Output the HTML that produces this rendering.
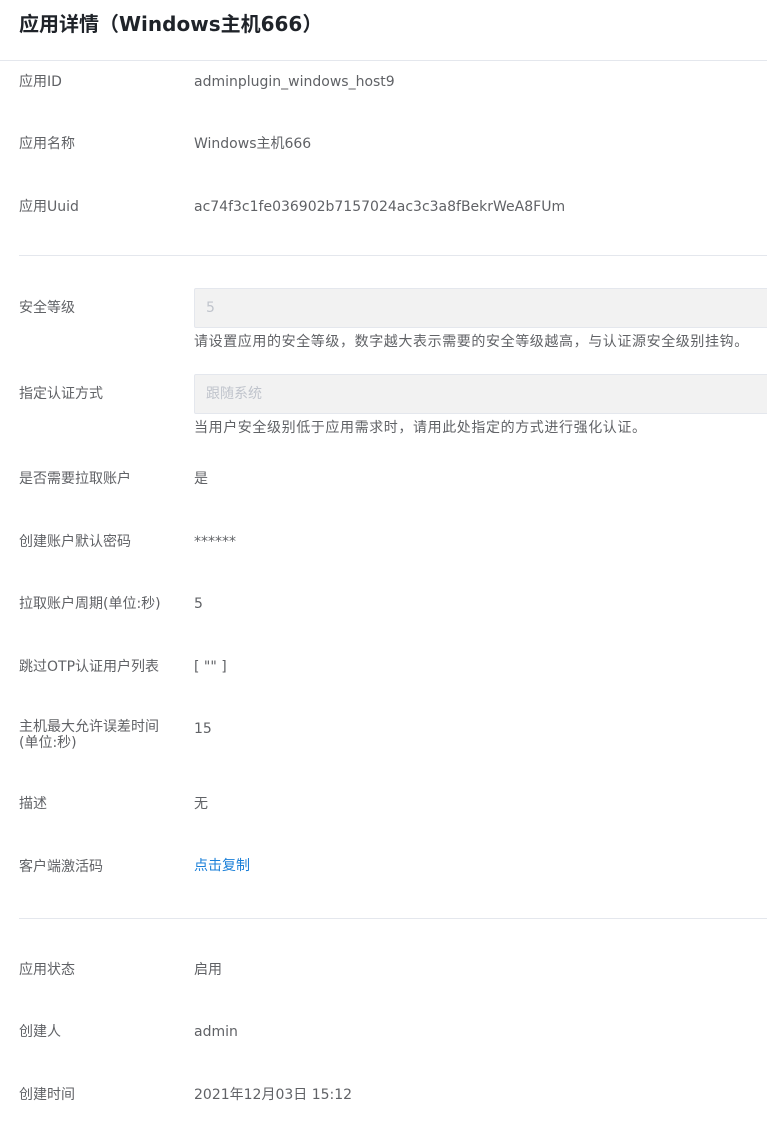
<!DOCTYPE html>
<html><head><meta charset="utf-8"><style>
body{margin:0;width:767px;height:1122px;background:#fff;font-family:"DejaVu Sans","Noto Sans CJK SC",sans-serif;position:relative;overflow:hidden}
.a{position:absolute;font-size:14px;line-height:20px;color:#606266;white-space:nowrap}
.l{left:19px}.v{left:194px}
.t{position:absolute;left:19px;top:8px;font-size:20px;line-height:30px;color:#1f2329;font-weight:bold;font-family:"Noto Sans CJK SC",sans-serif}
.t span{font-family:"DejaVu Sans",sans-serif;font-weight:600}
.hr{position:absolute;left:0;right:0;height:1px;background:#e4e7ed}
.in{position:absolute;left:194px;width:580px;height:40px;background:#f2f2f2;border:1px solid #e4e7ed;border-radius:2px;box-sizing:border-box;color:#c0c4cc;font-size:14px;line-height:38px;padding-left:11px}
.h{font-size:14px;color:#606266;letter-spacing:0.6px}
</style></head><body>
<div class="t">应用详情（<span>Windows</span>主机<span>666</span>）</div>
<div class="hr" style="top:60px"></div>
<div class="a l" style="top:72px">应用ID</div><div class="a v" style="top:72px">adminplugin_windows_host9</div>
<div class="a l" style="top:134px">应用名称</div><div class="a v" style="top:134px">Windows主机666</div>
<div class="a l" style="top:197px">应用Uuid</div><div class="a v" style="top:197px">ac74f3c1fe036902b7157024ac3c3a8fBekrWeA8FUm</div>
<div class="hr" style="left:19px;top:255px"></div>
<div class="a l" style="top:298px">安全等级</div><div class="in" style="top:288px">5</div>
<div class="a v h" style="top:332px">请设置应用的安全等级，数字越大表示需要的安全等级越高，与认证源安全级别挂钩。</div>
<div class="a l" style="top:384px">指定认证方式</div><div class="in" style="top:374px">跟随系统</div>
<div class="a v h" style="top:418px">当用户安全级别低于应用需求时，请用此处指定的方式进行强化认证。</div>
<div class="a l" style="top:469px">是否需要拉取账户</div><div class="a v" style="top:469px">是</div>
<div class="a l" style="top:532px">创建账户默认密码</div><div class="a v" style="top:532px">******</div>
<div class="a l" style="top:594px">拉取账户周期(单位:秒)</div><div class="a v" style="top:594px">5</div>
<div class="a l" style="top:657px">跳过OTP认证用户列表</div><div class="a v" style="top:657px">[ "" ]</div>
<div class="a l" style="top:719px;line-height:16px">主机最大允许误差时间<br>(单位:秒)</div><div class="a v" style="top:719px">15</div>
<div class="a l" style="top:794px">描述</div><div class="a v" style="top:794px">无</div>
<div class="a l" style="top:857px">客户端激活码</div><div class="a v" style="top:856px;color:#1a7fd8">点击复制</div>
<div class="hr" style="left:19px;top:918px"></div>
<div class="a l" style="top:960px">应用状态</div><div class="a v" style="top:960px">启用</div>
<div class="a l" style="top:1022px">创建人</div><div class="a v" style="top:1022px">admin</div>
<div class="a l" style="top:1085px">创建时间</div><div class="a v" style="top:1085px">2021年12月03日 15:12</div>
</body></html>
